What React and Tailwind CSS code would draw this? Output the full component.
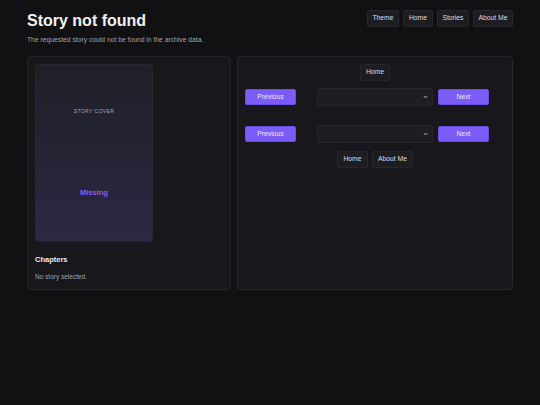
import React from "react";

const font = { fontFamily: '"Liberation Sans", Arial, sans-serif' };

function GhostButton({ children, w }) {
  return (
    <button className={`h-[17px] ${w} flex items-center justify-center rounded-[2px] border border-[#26262c] bg-[#1c1c21] text-[6.75px] leading-none text-[#dcdce0]`}>
      {children}
    </button>
  );
}

function PurpleButton({ children }) {
  return (
    <button className="h-[16px] w-[51px] flex items-center justify-center rounded-[2px] border border-[#6a4ee6] bg-[#7b5cf6] text-[6.75px] leading-none text-[#ece7ff]">
      {children}
    </button>
  );
}

function Select() {
  return (
    <div className="ml-[21px] h-[18px] w-[116px] rounded-[2px] border border-[#25252b] bg-[#1d1d23] flex items-center justify-end pr-[4px]">
      <svg width="5" height="4" viewBox="0 0 5 4" fill="none">
        <path d="M0.8 1 L2.5 2.8 L4.2 1" stroke="#c8c8cf" strokeWidth="0.9" />
      </svg>
    </div>
  );
}

function NavRow() {
  return (
    <div className="flex items-center">
      <PurpleButton>Previous</PurpleButton>
      <Select />
      <div className="ml-[5px]">
        <PurpleButton>Next</PurpleButton>
      </div>
    </div>
  );
}

export default function App() {
  return (
    <div className="min-h-[405px] w-full bg-[#111114] px-[27px] pt-[10px]" style={font}>
      <header className="flex items-start justify-between">
        <div>
          <h1 className="mt-[1px] text-[16px] leading-[20px] font-bold text-[#f1f1f3]">Story not found</h1>
          <p className="mt-[4px] text-[6.75px] leading-[10px] text-[#a1a1aa]">
            The requested story could not be found in the archive data.
          </p>
        </div>
        <nav className="flex gap-[4px]">
          <GhostButton w="w-[32px]">Theme</GhostButton>
          <GhostButton w="w-[30px]">Home</GhostButton>
          <GhostButton w="w-[32px]">Stories</GhostButton>
          <GhostButton w="w-[40px]">About Me</GhostButton>
        </nav>
      </header>

      <main className="mt-[11px] grid grid-cols-[204px_1fr] gap-[6px] h-[234px]">
        <section className="rounded-[4px] border border-[#25252b] bg-[#18181c] p-[7px]">
          <div className="h-[178px] w-[118px] rounded-[3px] border border-[#26262f] bg-gradient-to-b from-[#1f1f27] to-[#2c2843] flex flex-col items-center">
            <div className="mt-[43px] text-[5px] leading-[6px] tracking-[0.4px] text-[#a8a8b0]">STORY COVER</div>
            <div className="mt-[74px] text-[7.5px] leading-[10px] font-bold text-[#7f60f5]">Missing</div>
          </div>
          <h2 className="mt-[13px] text-[7.5px] leading-[10px] font-bold text-[#ececef]">Chapters</h2>
          <p className="mt-[7px] text-[6.5px] leading-[10px] text-[#a1a1aa]">No story selected.</p>
        </section>

        <section className="rounded-[4px] border border-[#25252b] bg-[#18181c] p-[7px] flex flex-col">
          <div className="flex justify-center">
            <GhostButton w="w-[30px]">Home</GhostButton>
          </div>
          <div className="mt-[7px]">
            <NavRow />
          </div>
          <div className="mt-[19px]">
            <NavRow />
          </div>
          <div className="mt-[8px] flex justify-center gap-[4px]">
            <GhostButton w="w-[31px]">Home</GhostButton>
            <GhostButton w="w-[41px]">About Me</GhostButton>
          </div>
        </section>
      </main>
    </div>
  );
}
